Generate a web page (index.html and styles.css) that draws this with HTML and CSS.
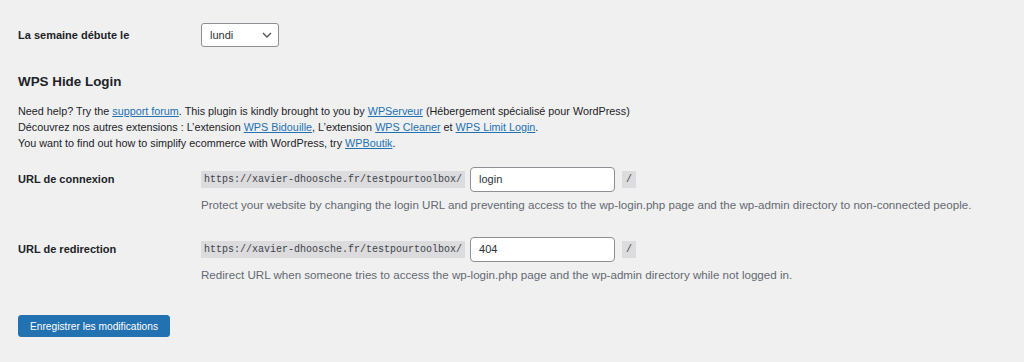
FILE: index.html
```
<!DOCTYPE html>
<html lang="fr">
<head>
    <meta charset="UTF-8">
    <meta name="viewport" content="width=device-width, initial-scale=1.0">
    <title>Réglages généraux</title>
    <link rel="stylesheet" href="styles.css">
</head>
<body>
    <div class="wrap">
        <div class="form-row first">
            <div class="row-label">La semaine débute le</div>
            <div class="row-field">
                <div class="select">
                    <span>lundi</span>
                    <svg width="10" height="6" viewBox="0 0 10 6"><path d="M1 1l4 4 4-4" fill="none" stroke="#50575e" stroke-width="1.4"/></svg>
                </div>
            </div>
        </div>

        <h2 class="title">WPS Hide Login</h2>
        <p class="intro">
            Need help? Try the <a href="#">support forum</a>. This plugin is kindly brought to you by <a href="#">WPServeur</a> (Hébergement spécialisé pour WordPress)<br>
            Découvrez nos autres extensions : L’extension <a href="#">WPS Bidouille</a>, L’extension <a href="#">WPS Cleaner</a> et <a href="#">WPS Limit Login</a>.<br>
            You want to find out how to simplify ecommerce with WordPress, try <a href="#">WPBoutik</a>.
        </p>

        <div class="form-row url-row">
            <div class="row-label">URL de connexion</div>
            <div class="row-field">
                <div class="url-line">
                    <code>https://xavier-dhoosche.fr/testpourtoolbox/</code>
                    <div class="text-input">login</div>
                    <code class="slash">/</code>
                </div>
                <p class="description">Protect your website by changing the login URL and preventing access to the wp-login.php page and the wp-admin directory to non-connected people.</p>
            </div>
        </div>

        <div class="form-row url-row second">
            <div class="row-label">URL de redirection</div>
            <div class="row-field">
                <div class="url-line">
                    <code>https://xavier-dhoosche.fr/testpourtoolbox/</code>
                    <div class="text-input">404</div>
                    <code class="slash">/</code>
                </div>
                <p class="description">Redirect URL when someone tries to access the wp-login.php page and the wp-admin directory while not logged in.</p>
            </div>
        </div>

        <button type="button" class="button-primary">Enregistrer les modifications</button>
    </div>
</body>
</html>
```

FILE: styles.css
```
body {
    margin: 0;
    background: #f0f0f1;
    color: #1d2327;
    font-family: "Liberation Sans", Arial, sans-serif;
    font-size: 11px;
}
.wrap {
    padding: 23px 18px 0;
}
a {
    color: #2271b1;
    text-decoration: underline;
}
.form-row {
    display: grid;
    grid-template-columns: 183px 1fr;
    align-items: start;
}
.row-label {
    font-weight: bold;
    line-height: 24px;
}
.select {
    width: 78px;
    height: 24px;
    box-sizing: border-box;
    border: 1px solid #8c8f94;
    border-radius: 3px;
    background: #fff;
    display: flex;
    align-items: center;
    justify-content: space-between;
    padding: 0 6px 0 8px;
    color: #2c3338;
}
.title {
    margin: 25px 0 0;
    font-size: 13.4px;
    line-height: 20px;
    font-weight: bold;
}
.intro {
    margin: 11px 0 0;
    font-size: 10.8px;
    line-height: 16px;
}
.url-row {
    margin-top: 16px;
}
.url-row .row-label {
    line-height: 25px;
}
.url-row.second {
    margin-top: 24px;
}
.url-line {
    display: flex;
    align-items: center;
    height: 25px;
}
code {
    font-family: "Liberation Mono", "DejaVu Sans Mono", monospace;
    font-size: 10px;
    line-height: 17px;
    background: #dcdcde;
    color: #3c434a;
    padding: 0 3px;
}
.text-input {
    width: 145px;
    height: 25px;
    box-sizing: border-box;
    margin-left: 5px;
    border: 1px solid #8c8f94;
    border-radius: 4px;
    background: #fff;
    padding: 0 8px;
    line-height: 23px;
    color: #2c3338;
}
.slash {
    margin-left: 7px;
    padding: 0 4px;
}
.description {
    margin: 5px 0 0;
    font-size: 11.6px;
    line-height: 16px;
    color: #646970;
}
.button-primary {
    margin-top: 32px;
    width: 152px;
    height: 22px;
    padding: 0;
    border: 1px solid #2271b1;
    border-radius: 3px;
    background: #2271b1;
    color: #fff;
    font-family: inherit;
    font-size: 10.2px;
}
```
